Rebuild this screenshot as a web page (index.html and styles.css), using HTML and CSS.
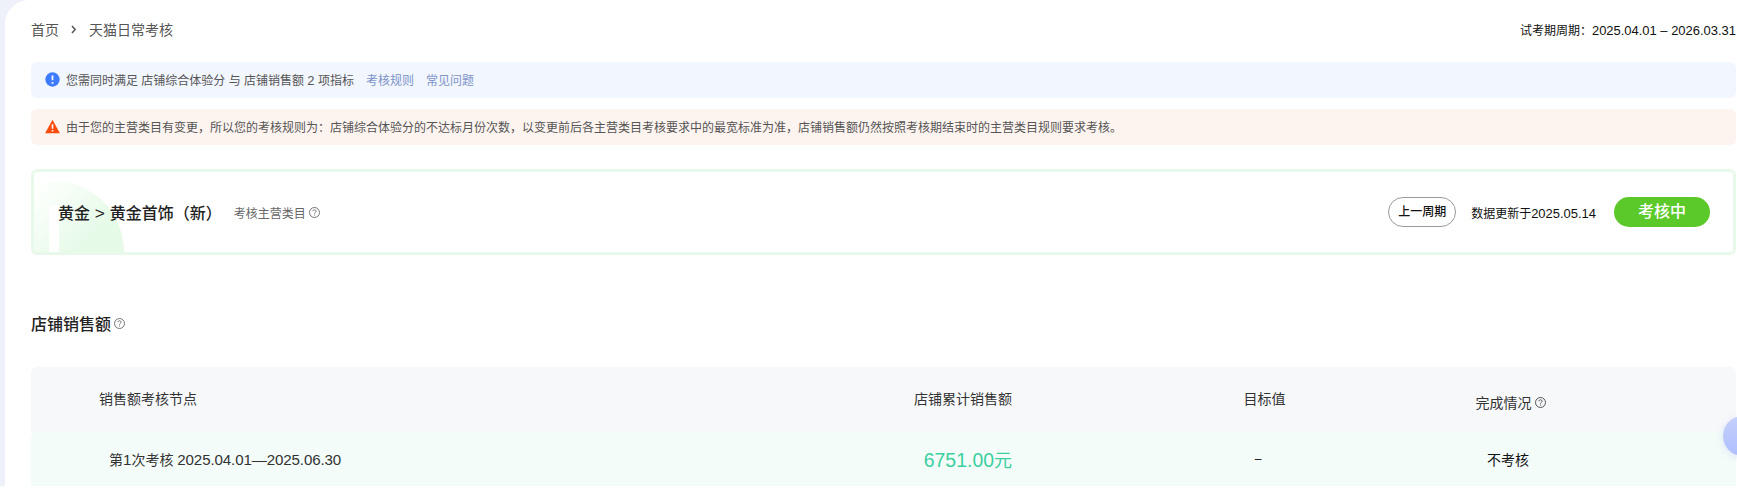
FILE: index.html
```html
<!DOCTYPE html>
<html lang="zh-CN">
<head>
  <meta charset="UTF-8">
  <title>天猫日常考核</title>
  <link rel="stylesheet" href="styles.css">
</head>
<body>

  <div class="shell">
    <div class="main">
      <!-- Top row -->
      <div class="top-row">
        <div class="crumbs">
          <span>首页</span>
          <svg class="crumb-arrow" width="6" height="9" viewBox="0 0 6 9"><path d="M1 1l3.2 3.5L1 8" fill="none" stroke="#555" stroke-width="1.5"/></svg>
          <span>天猫日常考核</span>
        </div>
        <div class="period">试考期周期：<span class="num">2025.04.01 – 2026.03.31</span></div>
      </div>

      <!-- Notices -->
      <div class="notice notice-info">
        <svg class="notice-icon" width="15" height="15" viewBox="0 0 14 14">
          <circle cx="7" cy="7" r="6.7" fill="#3f7bff"/>
          <path d="M7 3.2v4.6M7 9.4v1.5" stroke="#fff" stroke-width="1.6" fill="none"/>
        </svg>
        <span>您需同时满足 店铺综合体验分 与 店铺销售额 <span class="num">2</span> 项指标</span>
        <a class="notice-link first-link">考核规则</a>
        <a class="notice-link">常见问题</a>
      </div>
      <div class="notice notice-warn">
        <svg class="notice-icon" width="15" height="15" viewBox="0 0 14 14">
          <path d="M7 .8L13.9 13.2H.1z" fill="#fa4b0c"/>
          <path d="M7 5v4.2M7 10.2v1.5" stroke="#fff" stroke-width="1.5" fill="none"/>
        </svg>
        <span>由于您的主营类目有变更，所以您的考核规则为：店铺综合体验分的不达标月份次数，以变更前后各主营类目考核要求中的最宽标准为准，店铺销售额仍然按照考核期结束时的主营类目规则要求考核。</span>
      </div>

      <!-- Category card -->
      <div class="card">
        <div class="card-deco"></div>
        <div class="card-left">
          <span class="card-title">黄金<span class="num"> &gt; </span>黄金首饰（新）</span>
          <span class="card-sub">考核主营类目</span>
          <svg class="help" width="11" height="11" viewBox="0 0 11 11"><circle cx="5.5" cy="5.5" r="5" fill="none" stroke="#666" stroke-width=".9"/><path d="M3.9 4.3c0-2 3.2-2 3.2-.1 0 1.2-1.6 1.2-1.6 2.5M5.5 7.6v1" fill="none" stroke="#666" stroke-width=".9"/></svg>
        </div>
        <div class="card-right">
          <span class="pill">上一周期</span>
          <span class="updated">数据更新于<span class="num">2025.05.14</span></span>
          <span class="status">考核中</span>
        </div>
      </div>

      <!-- Sales section -->
      <div class="section-title">
        <span>店铺销售额</span>
        <svg class="help" width="11" height="11" viewBox="0 0 11 11"><circle cx="5.5" cy="5.5" r="5" fill="none" stroke="#666" stroke-width=".9"/><path d="M3.9 4.3c0-2 3.2-2 3.2-.1 0 1.2-1.6 1.2-1.6 2.5M5.5 7.6v1" fill="none" stroke="#666" stroke-width=".9"/></svg>
      </div>

      <div class="table-head table-grid">
        <div class="col-node">销售额考核节点</div>
        <div class="col-amount">店铺累计销售额</div>
        <div class="col-target">目标值</div>
        <div class="col-state state-head">
          <span>完成情况</span>
          <svg class="help" width="11" height="11" viewBox="0 0 11 11"><circle cx="5.5" cy="5.5" r="5" fill="none" stroke="#444" stroke-width=".9"/><path d="M3.9 4.3c0-2 3.2-2 3.2-.1 0 1.2-1.6 1.2-1.6 2.5M5.5 7.6v1" fill="none" stroke="#444" stroke-width=".9"/></svg>
        </div>
      </div>
      <div class="table-row table-grid">
        <div class="col-node">第<span class="num">1</span>次考核 <span class="num node-dates">2025.04.01—2025.06.30</span></div>
        <div class="col-amount amount"><span class="num">6751.00</span>元</div>
        <div class="col-target target-none">–</div>
        <div class="col-state">不考核</div>
      </div>
    </div>
    <div class="float-ball"></div>
  </div>

</body>
</html>
```

FILE: styles.css
```css
body {
  margin: 0;
  background: #fff;
  font-family: "Liberation Sans", "Noto Sans CJK SC", sans-serif;
  color: #111;
  overflow: hidden;
}

/* Latin and digits run a bit larger than the CJK around them */
.num {
  font-size: 1.08em;
}

/* Page frame */
.shell {
  position: relative;
  height: 486px;
  background: #eef0fa;
  padding-left: 5px;
  overflow: hidden;
}

.main {
  height: 486px;
  box-sizing: border-box;
  background: #fff;
  border-top-left-radius: 24px;
  padding: 17px 1px 0 26px;
}

/* Breadcrumb row */
.top-row {
  display: flex;
  justify-content: space-between;
  align-items: center;
  height: 24px;
}

.crumbs {
  display: flex;
  align-items: center;
  font-size: 14px;
  color: #555;
}

.crumb-arrow {
  margin: 0 12px;
}

.period {
  font-size: 12px;
  color: #111;
}

/* Notices */
.notice {
  display: flex;
  align-items: center;
  box-sizing: border-box;
  height: 36px;
  padding: 0 0 2px 14px;
  border-radius: 6px;
  font-size: 12px;
  color: #555;
}

.notice-info {
  margin-top: 21px;
  background: #f2f6fe;
}

.notice-warn {
  margin-top: 11px;
  background: #fdf4f0;
}

.notice-icon {
  margin-right: 6px;
  flex: none;
}

.notice-link {
  margin-left: 12px;
  color: #7d93c8;
}

/* Category card */
.card {
  position: relative;
  display: flex;
  justify-content: space-between;
  align-items: center;
  box-sizing: border-box;
  height: 86px;
  margin-top: 24px;
  padding: 0 23px 0 24px;
  border: 3px solid #e8f8ea;
  border-radius: 6px;
  overflow: hidden;
}

.card-deco {
  position: absolute;
  left: 0;
  bottom: 0;
  width: 90px;
  height: 71px;
  border-top-right-radius: 70px 71px;
  border-top-left-radius: 20px 6px;
  background: linear-gradient(135deg, #fcfffc 10%, #e6fae8 70%);
}

.card-deco::after {
  content: "";
  position: absolute;
  left: 15px;
  bottom: 0;
  width: 10px;
  height: 47px;
  border-top-left-radius: 4px;
  background: #fff;
}

.card-left,
.card-right {
  position: relative;
  display: flex;
  align-items: center;
}

.card-title {
  font-size: 16px;
  font-weight: 500;
  color: #222;
}

.card-sub {
  margin-left: 12px;
  font-size: 12px;
  color: #666;
}

.help {
  margin-left: 3px;
  flex: none;
}

.pill {
  box-sizing: border-box;
  width: 68px;
  height: 30px;
  line-height: 28px;
  text-align: center;
  border: 1px solid #999;
  border-radius: 15px;
  font-size: 12px;
  font-weight: 500;
}

.updated {
  margin-left: 15px;
  font-size: 12px;
}

.status {
  width: 96px;
  height: 30px;
  margin-left: 18px;
  line-height: 30px;
  text-align: center;
  border-radius: 15px;
  background: #5cc92a;
  color: #fff;
  font-size: 16px;
  font-weight: 500;
}

/* Sales table */
.section-title {
  display: flex;
  align-items: center;
  height: 24px;
  margin-top: 56px;
  font-size: 16px;
  font-weight: 500;
  color: #222;
}

.table-grid {
  display: grid;
  grid-template-columns: 800px 181px 377px 238px;
  align-items: center;
  font-size: 14px;
}

.table-head {
  height: 65px;
  margin-top: 32px;
  padding-bottom: 3px;
  box-sizing: border-box;
  border-radius: 6px 6px 0 0;
  background: #f7f8fa;
  color: #333;
}

.table-row {
  height: 55px;
  margin-top: -1px;
  box-sizing: border-box;
  border-radius: 6px 6px 0 0;
  background: #f4fcf9;
}

.table-head .col-node {
  padding-left: 68px;
}

.table-row .col-node {
  padding-left: 78px;
  color: #333;
}

.node-dates {
  letter-spacing: -0.12px;
}

.col-amount {
  text-align: right;
}

.amount {
  font-size: 18px;
  color: #3ccf9f;
}

.col-target {
  padding-left: 128px;
  text-align: center;
}

.target-none {
  padding-right: 13px;
  font-size: 12px;
}

.col-state {
  text-align: center;
}

.state-head {
  display: flex;
  justify-content: center;
  align-items: center;
  margin-top: 8px;
  padding-left: 5px;
}

/* Floating helper on the right edge */
.float-ball {
  position: absolute;
  left: 1723px;
  top: 416px;
  width: 40px;
  height: 40px;
  border-radius: 50%;
  background: linear-gradient(180deg, #c4d0fb, #aebffd);
  box-shadow: 0 2px 8px rgba(120, 140, 220, 0.2);
}
```
